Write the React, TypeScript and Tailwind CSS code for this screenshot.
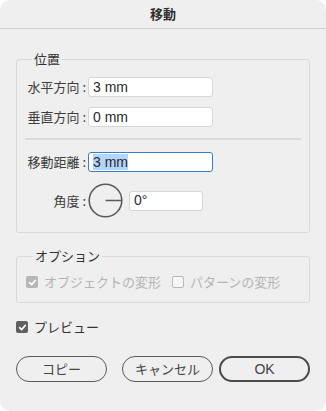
import React from 'react';

const jp = { fontFamily: '"Noto Sans CJK JP", "Liberation Sans", sans-serif' };

function Field({ children, active }: { children: React.ReactNode; active?: boolean }) {
  return (
    <div
      className={
        'flex h-[20px] w-[125px] items-center rounded-[3px] bg-white pl-[4px] text-[14px] text-[#2a2a2a] font-["Liberation_Sans",sans-serif] ' +
        (active ? 'border-[1.5px] border-[#3b7ccc]' : 'border border-[#d6d6d6]')
      }
    >
      {children}
    </div>
  );
}

function Row({ label, children }: { label: string; children: React.ReactNode }) {
  return (
    <div className="flex items-center">
      <div className="w-[63px] pr-[2px] text-right text-[13px] text-[#3c3c3c] leading-[16px]">{label}</div>
      {children}
    </div>
  );
}

function Check({ checked, disabled }: { checked?: boolean; disabled?: boolean }) {
  if (!checked) {
    return <div className="h-[12px] w-[12px] rounded-[2px] border border-[#b9b9b9] bg-[#f7f7f7]" />;
  }
  return (
    <div
      className={
        'flex h-[12px] w-[12px] items-center justify-center rounded-[2px] ' +
        (disabled ? 'bg-[#b7b7b7]' : 'bg-[#5f5f5f]')
      }
    >
      <svg width="9" height="9" viewBox="0 0 9 9">
        <path d="M1.6 4.7 L3.6 6.6 L7.4 2.3" fill="none" stroke="white" strokeWidth="1.7" strokeLinecap="round" strokeLinejoin="round" />
      </svg>
    </div>
  );
}

export default function App() {
  return (
    <div className="h-[411px] w-[326px] bg-white" style={jp}>
      <div className="flex h-full flex-col overflow-hidden rounded-[10px] bg-[#efefef]">
        <div className="flex h-[29px] shrink-0 items-center justify-center border-b border-[#cfcfcf] text-[13px] font-bold text-[#2e2e2e]">
          移動
        </div>

        <div className="flex flex-col px-[16px]">
          {/* 位置 */}
          <fieldset className="mt-[22px] rounded-[3px] border border-[#d9d9d9] pb-[14px] pl-[8px] pr-[8px] pt-[10px]">
            <legend className="ml-[7px] px-[2px] text-[13px] leading-[16px] text-[#333]">位置</legend>
            <div className="flex flex-col gap-[10px]">
              <Row label="水平方向 :">
                <Field>3 mm</Field>
              </Row>
              <Row label="垂直方向 :">
                <Field>0 mm</Field>
              </Row>
            </div>
            <div className="mt-[11px] h-[2px] bg-[#d9d9d9]" />
            <div className="mt-[12px] flex flex-col gap-[11px]">
              <Row label="移動距離 :">
                <Field active>
                  <span className="bg-[#b3d4fc] leading-[16px]">3 mm</span>
                </Field>
              </Row>
              <Row label="角度 :">
                <svg width="35" height="35" viewBox="0 0 35 35" className="shrink-0">
                  <circle cx="17.5" cy="17.5" r="16.3" fill="none" stroke="#5a5a5a" strokeWidth="1.6" />
                  <line x1="17.5" y1="17.5" x2="33.8" y2="17.5" stroke="#5a5a5a" strokeWidth="1.6" />
                </svg>
                <div className="ml-[6px] flex h-[20px] w-[74px] items-center rounded-[3px] border border-[#d6d6d6] bg-white pl-[4px] font-['Liberation_Sans',sans-serif] text-[14px] text-[#2a2a2a]">
                  0°
                </div>
              </Row>
            </div>
          </fieldset>

          {/* オプション */}
          <fieldset className="mt-[15px] rounded-[3px] border border-[#d9d9d9] pb-[12px] pl-[9px] pt-[10px]">
            <legend className="ml-[7px] px-[2px] text-[13px] leading-[16px] text-[#333]">オプション</legend>
            <div className="flex items-center text-[13px] leading-[16px] text-[#b4b4b4]">
              <Check checked disabled />
              <span className="ml-[6px]">オブジェクトの変形</span>
              <div className="ml-[11px]">
                <Check />
              </div>
              <span className="ml-[6px]">パターンの変形</span>
            </div>
          </fieldset>

          {/* プレビュー */}
          <div className="mt-[16px] flex h-[16px] items-center text-[13px] leading-[16px] text-[#333]">
            <Check checked />
            <span className="ml-[6px]">プレビュー</span>
          </div>

          <div className="mt-[21px] flex items-center">
            <button className="h-[26px] w-[91px] rounded-full border border-[#5a5a5a] text-[13px] text-[#444]">コピー</button>
            <button className="ml-[15px] h-[26px] w-[91px] rounded-full border border-[#5a5a5a] text-[13px] text-[#444]">キャンセル</button>
            <button className="ml-[6px] h-[26px] w-[91px] rounded-full border-2 border-[#4a4a4a] font-['Liberation_Sans',sans-serif] text-[14px] text-[#444]">
              OK
            </button>
          </div>
        </div>
      </div>
    </div>
  );
}
